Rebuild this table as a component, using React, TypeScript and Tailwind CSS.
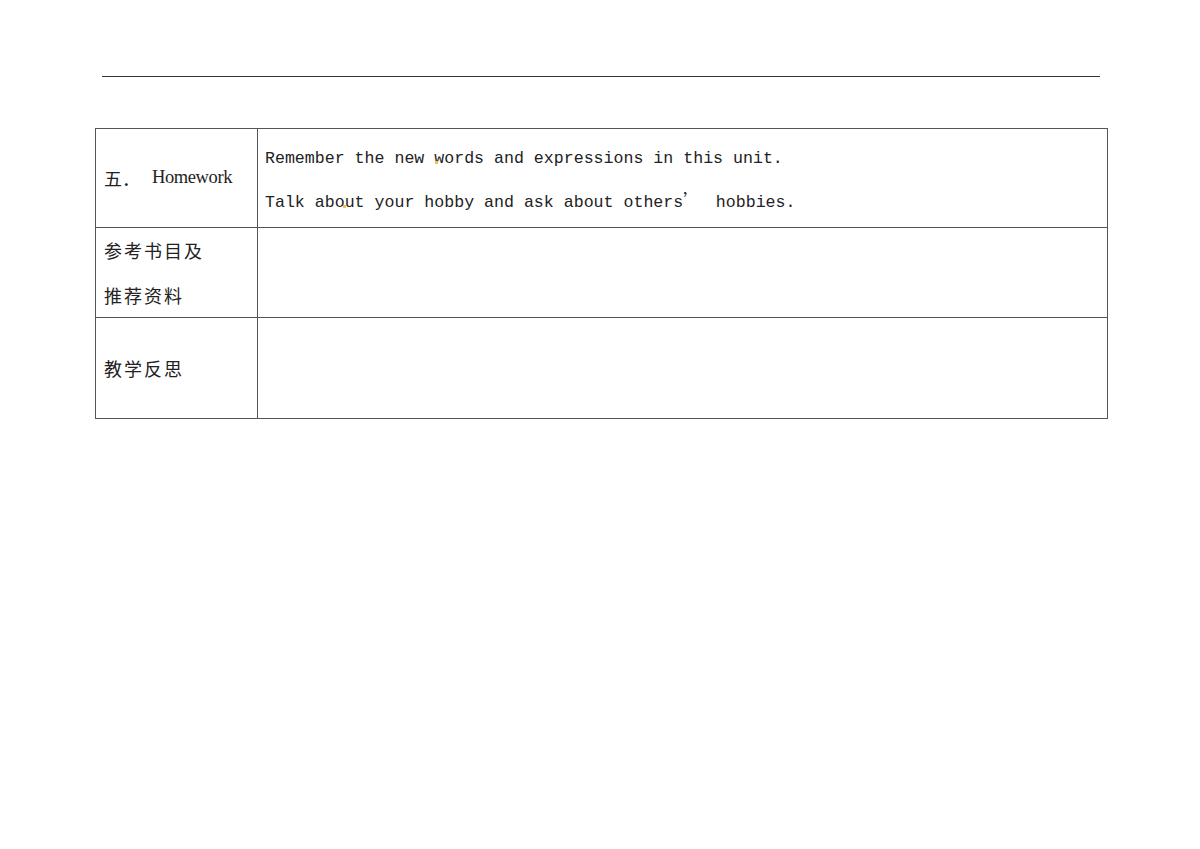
const cjk = "font-['Noto_Sans_CJK_SC','Noto_Sans',sans-serif]"

export default function App() {
  return (
    <div className="min-h-screen h-[849px] bg-white text-[#222] overflow-hidden">
      {/* page header rule */}
      <div className="pt-[76px] pl-[102px]">
        <div className="w-[998px] border-t border-[#333]"></div>
      </div>

      {/* lesson table */}
      <div className="ml-[95px] mt-[51px] w-[1013px] grid grid-cols-[162px_1fr] border border-[#555]">
        <div className="h-[99px] flex items-center pl-[8px] border-r border-b border-[#555]">
          <span className={`${cjk} text-[18px] text-[#222]`}>五．</span>
          <span className="ml-[12px] font-['Liberation_Serif',serif] text-[18.5px] tracking-[-0.4px] text-[#222]">Homework</span>
        </div>
        <div className="relative h-[99px] flex flex-col justify-center pt-[5px] pl-[7px] border-b border-[#555] font-['Liberation_Mono',monospace] text-[16.6px] leading-[44px] text-[#222]">
          <p className="h-[44px]">Remember the new words and expressions in this unit.</p>
          <p className="h-[44px] whitespace-nowrap">
            Talk about your hobby and ask about others<span className={`${cjk} leading-none mr-[6px]`}>’</span>{'\u00a0'}hobbies.
          </p>
          <span className="absolute left-[177px] top-[32px] w-[3px] h-[3px] bg-[#e8c64a]"></span>
          <span className="absolute left-[85px] top-[76px] w-[3px] h-[3px] bg-[#e8c64a]"></span>
        </div>

        <div className={`h-[90px] flex flex-col justify-center pl-[8px] border-r border-b border-[#555] ${cjk} text-[18px] tracking-[2px] leading-[45px] text-[#222]`}>
          <p>参考书目及</p>
          <p>推荐资料</p>
        </div>
        <div className="h-[90px] border-b border-[#555]"></div>

        <div className={`h-[100px] flex items-center pl-[8px] border-r border-[#555] ${cjk} text-[18px] tracking-[2px] text-[#222]`}>
          <p>教学反思</p>
        </div>
        <div className="h-[100px]"></div>
      </div>
    </div>
  )
}
